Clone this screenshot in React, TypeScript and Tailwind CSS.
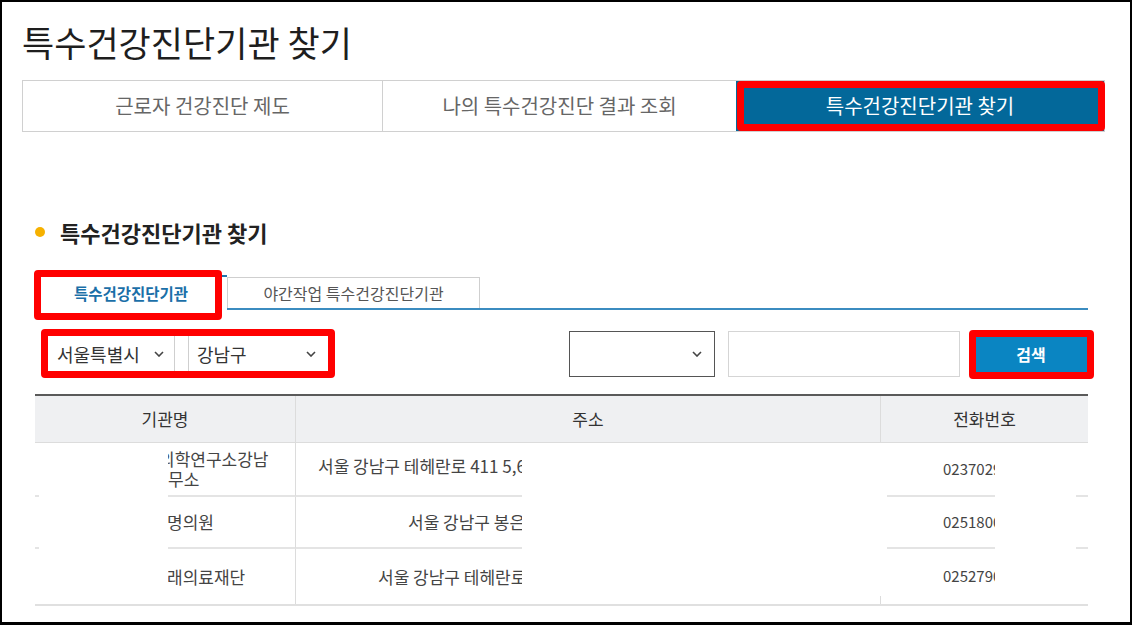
import React from 'react'

// red annotation frame drawn over the marked controls
function RedMark({ className }: { className: string }) {
  return <div className={`pointer-events-none absolute rounded-[4px] border-[7px] border-[#ff0000] ${className}`} />
}

function Chevron() {
  return (
    <svg width="10" height="6" viewBox="0 0 10 6" fill="none" className="shrink-0">
      <path d="M1 1l4 4 4-4" stroke="#444" strokeWidth="1.6" />
    </svg>
  )
}

type RowProps = {
  height: string
  last?: boolean
  name: React.ReactNode
  addr: string
  addrPad: string
  phone: string
}

function Row({ height, last, name, addr, addrPad, phone }: RowProps) {
  const line = last ? '' : 'border-b-2 border-[#e4e4e4]'
  return (
    <div className={`flex ${height}`}>
      <div className="flex w-[133px] items-end">
        {!last && <div className="h-[2px] w-[4px] bg-[#e4e4e4]" />}
      </div>
      <div className={`flex w-[127px] items-center overflow-hidden whitespace-nowrap ${line}`}>{name}</div>
      <div className={`flex w-[227px] items-center overflow-hidden whitespace-nowrap border-l border-l-[#dcdcdc] ${line}`}>
        <span className={addrPad}>{addr}</span>
      </div>
      <div className="w-[358px]" />
      <div className="flex w-[7px] items-end">
        {last && <div className="h-[8px] border-l border-[#dcdcdc]" />}
      </div>
      <div className={`flex w-[108px] items-center overflow-hidden whitespace-nowrap pl-[56px] text-[15px] ${line}`}>
        {phone}
      </div>
      <div className="w-[81px]" />
      <div className={`w-[12px] ${line}`} />
    </div>
  )
}

export default function App() {
  return (
    <div className="h-[625px] w-[1132px] overflow-hidden border-2 border-b-[3px] border-black bg-white font-['Noto_Sans_CJK_KR','Noto_Sans',sans-serif] text-[#333]">
      <div className="pl-[20px] pr-[25px] pt-[21px]">
        <h1 className="text-[35px] leading-[38px] text-[#1e1e1e]">특수건강진단기관 찾기</h1>

        {/* Main tabs */}
        <div className="mt-[19px] flex h-[52px] border border-[#d0d0d0] text-[20px]">
          <div className="flex w-[360px] items-center justify-center border-r border-[#d0d0d0] text-[#666]">
            근로자 건강진단 제도
          </div>
          <div className="flex w-[353px] items-center justify-center text-[#666]">나의 특수건강진단 결과 조회</div>
          <div className="relative flex flex-1 items-center justify-center bg-[#03689a] text-white">
            특수건강진단기관 찾기
            <RedMark className="-right-px bottom-0 left-[1px] top-0" />
          </div>
        </div>
      </div>

      <div className="pl-[33px] pr-[42px]">
        <div className="mt-[86px] flex h-[28px] items-center">
          <span className="h-[10px] w-[10px] rounded-full bg-[#f6b100]" />
          <h2 className="ml-[15px] text-[22px] font-bold leading-[28px] text-[#222]">특수건강진단기관 찾기</h2>
        </div>

        {/* Sub tabs */}
        <div className="relative mt-[29px] flex h-[35px] items-end border-b-2 border-[#3b8cc0]">
          <div className="-mb-[2px] flex h-[35px] w-[192px] items-center justify-center border-t-2 border-[#1f74ad] bg-white text-[15.5px] font-bold text-[#1b6fa8]">
            특수건강진단기관
          </div>
          <div className="flex h-[31px] w-[253px] items-center justify-center border border-b-0 border-[#cfcfcf] text-[16px] text-[#555]">
            야간작업 특수건강진단기관
          </div>
          <RedMark className="-left-px -top-[5px] h-[50px] w-[188px]" />
        </div>

        {/* Search filters */}
        <div className="mt-[21px] flex h-[46px]">
          <div className="relative flex gap-[13px] pl-[11px] text-[18px] text-[#333]">
            <div className="flex w-[129px] items-center justify-between border border-[#cfcfcf] pl-[10px] pr-[10px]">
              서울특별시
              <Chevron />
            </div>
            <div className="flex w-[145px] items-center justify-between border border-[#cfcfcf] pl-[8px] pr-[16px]">
              강남구
              <Chevron />
            </div>
            <RedMark className="-top-[2px] left-[6px] h-[49px] w-[294px]" />
          </div>

          <div className="ml-auto flex">
            <div className="flex w-[146px] items-center justify-end border border-[#555] pr-[12px]">
              <Chevron />
            </div>
            <div className="ml-[13px] w-[232px] border border-[#d5d5d5]" />
            <div className="relative ml-[14px] flex w-[114px] items-center justify-center bg-[#0a85c2] text-[16px] font-bold text-white">
              검색
              <RedMark className="-bottom-[2px] -left-[5px] -right-[6px] -top-px" />
            </div>
          </div>
        </div>

        {/* Result table */}
        <div className="mt-[17px] border-b-2 border-[#e0e0e0] text-[17px] text-[#444]">
          <div className="flex h-[49px] border-b border-t-2 border-b-[#dcdcdc] border-t-[#5a5a5a] bg-[#eff0f2] text-[#333]">
            <div className="flex w-[260px] items-center justify-center">기관명</div>
            <div className="flex w-[585px] items-center justify-center border-l border-[#dcdcdc]">주소</div>
            <div className="flex flex-1 items-center justify-center border-l border-[#dcdcdc]">전화번호</div>
          </div>

          <Row
            height="h-[54px]"
            name={
              <div className="flex flex-col leading-[20px]">
                <span className="-ml-[9px]">의학연구소강남</span>
                <span>무소</span>
              </div>
            }
            addr="서울 강남구 테헤란로 411 5,6층"
            addrPad="pb-[6px] pl-[22px]"
            phone="0237029000"
          />
          <Row
            height="h-[52px]"
            name={<span className="-ml-px">명의원</span>}
            addr="서울 강남구 봉은사로 524"
            addrPad="pl-[112px]"
            phone="0251800000"
          />
          <Row
            height="h-[55px]"
            last
            name={<span className="-ml-px">래의료재단</span>}
            addr="서울 강남구 테헤란로 114"
            addrPad="pl-[82px]"
            phone="0252790000"
          />
        </div>
      </div>
    </div>
  )
}
